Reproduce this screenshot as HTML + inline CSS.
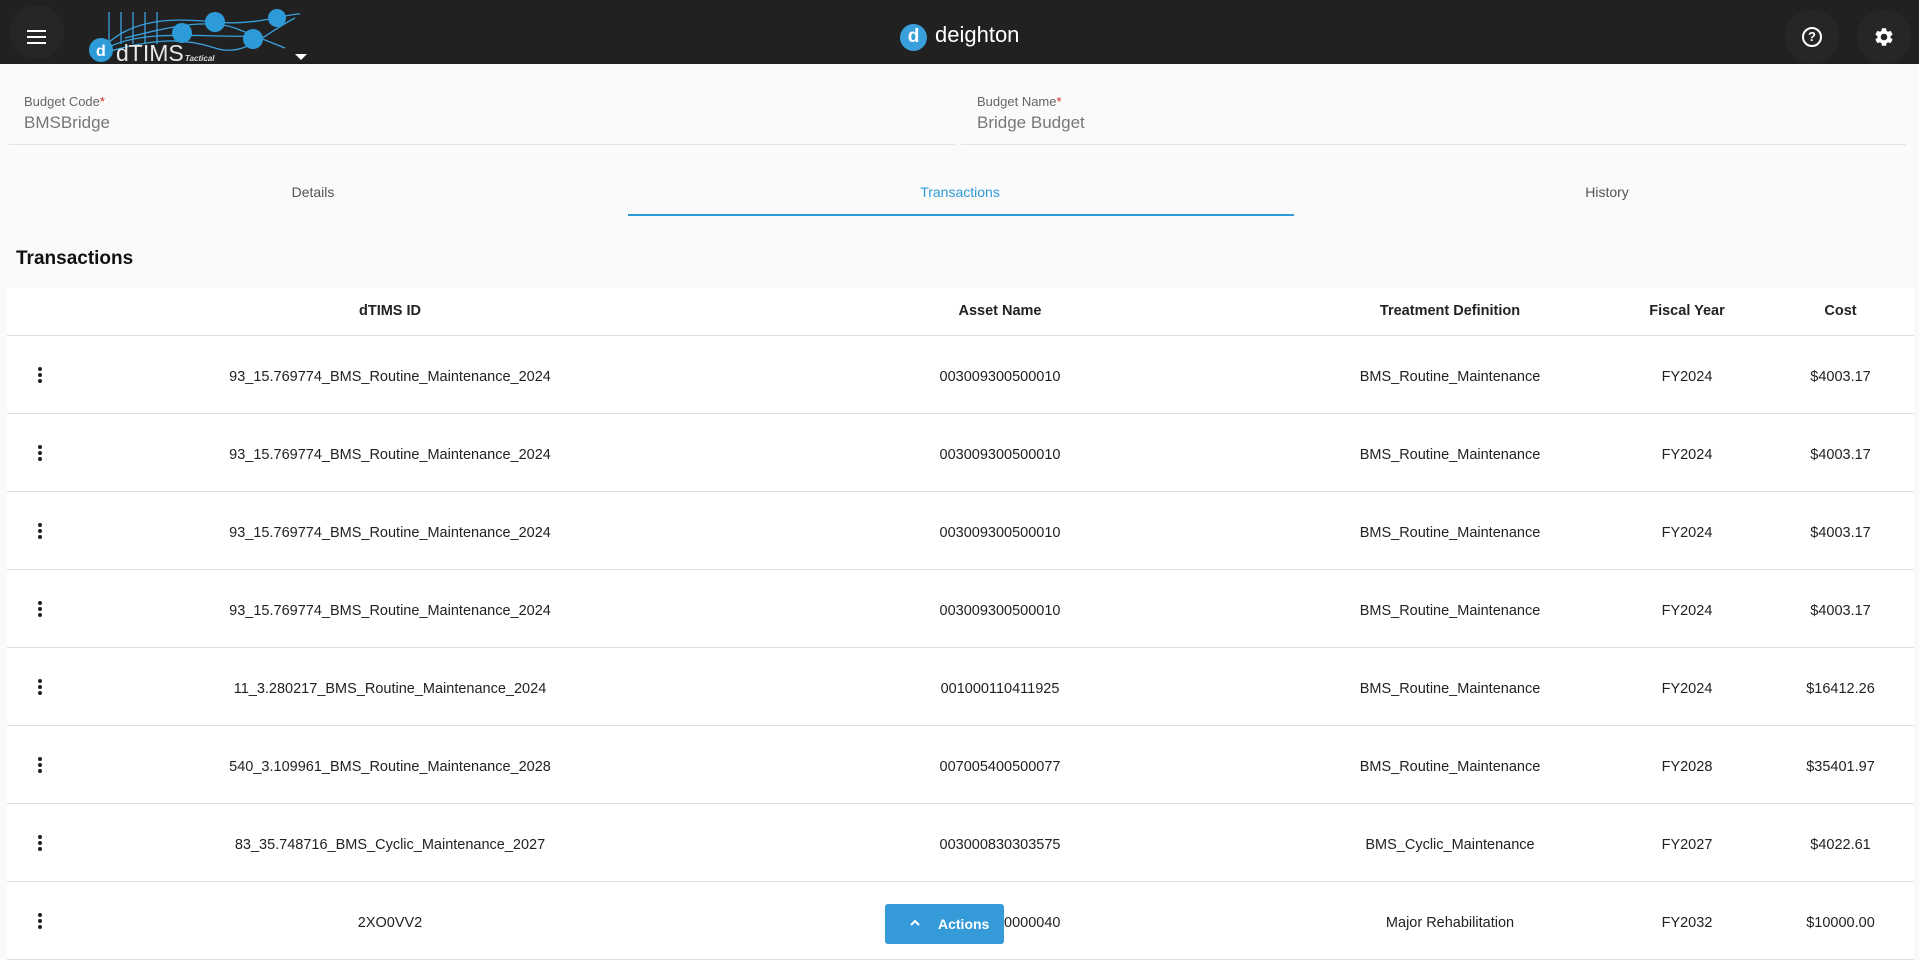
<!DOCTYPE html>
<html><head><meta charset="utf-8">
<style>
*{box-sizing:border-box;margin:0;padding:0}
body{width:1919px;height:942px;overflow:hidden;background:#fafafa;font-family:"Liberation Sans",sans-serif;color:#212121;position:relative}
.hdr{position:absolute;left:0;top:0;width:1919px;height:64px;background:#212121}
.abs{position:absolute}
.lbl{font-size:13px;color:#666}
.lbl b{color:#d32f2f;font-weight:normal}
.val{font-size:17px;color:#777}
.line{height:1px;background:#e4e4e4}
.tab{font-size:14px;color:#555;width:200px;text-align:center;margin-left:-100px}
table{position:absolute;left:7px;top:288px;width:1907px;border-collapse:collapse;background:#fff;font-size:14.5px}
th{height:47px;font-weight:bold;font-size:14.5px;border-bottom:1px solid #e0e0e0;color:#222}
td{height:78px;text-align:center;border-bottom:1px solid #e0e0e0;color:#222;padding-top:6px}
.k{width:66px}
.dots{display:inline-block;width:4px}
.dots i{display:block;width:4px;height:4px;border-radius:2px;background:#222;margin:2px 0}
</style></head><body>
<div class="hdr">
  <div class="abs" style="left:10px;top:5px;width:54px;height:54px;border-radius:50%;background:#262626"></div>
  <div class="abs" style="left:27px;top:30px;width:19px;height:2px;background:#fff"></div>
  <div class="abs" style="left:27px;top:36px;width:19px;height:2px;background:#fff"></div>
  <div class="abs" style="left:27px;top:42px;width:19px;height:2px;background:#fff"></div>
  <svg class="abs" style="left:85px;top:8px" width="220" height="56" viewBox="0 0 220 56">
    <g stroke="#3aa0dc" stroke-width="1.3" fill="none">
      <line x1="24" y1="4" x2="24" y2="36"/><line x1="36" y1="4" x2="36" y2="36"/><line x1="48" y1="4" x2="48" y2="36"/><line x1="60" y1="4" x2="60" y2="36"/><line x1="72" y1="4" x2="72" y2="36"/>
      <path d="M22 36 C50 10 90 10 130 14 C170 18 200 6 215 6"/>
      <path d="M22 40 C60 20 120 30 170 28 L200 40"/>
      <path d="M22 44 C70 30 100 30 130 40 C160 50 180 25 210 10"/>
      <path d="M40 30 C80 20 120 10 150 20 L170 28"/>
    </g>
    <circle cx="97" cy="25" r="10" fill="#2e9bd9"/>
    <circle cx="130" cy="14" r="10" fill="#2e9bd9"/>
    <circle cx="168" cy="31" r="10" fill="#2e9bd9"/>
    <circle cx="192" cy="10" r="9" fill="#2e9bd9"/>
    <circle cx="16" cy="42" r="12" fill="#2e9bd9"/>
    <text x="11" y="48" font-size="16" font-weight="bold" fill="#fff" font-family="Liberation Sans">d</text>
    <text x="31" y="53" font-size="23" fill="#e8e8e8" font-family="Liberation Sans">dTIMS</text>
    <text x="100" y="53" font-size="8" font-style="italic" font-weight="bold" fill="#ddd" font-family="Liberation Sans">Tactical</text>
  </svg>
  <div class="abs" style="left:295px;top:54px;width:0;height:0;border-left:6px solid transparent;border-right:6px solid transparent;border-top:6px solid #fff"></div>
  <div class="abs" style="left:900px;top:24px;width:27px;height:27px;border-radius:50%;background:#3aa0dc;color:#fff;font-weight:bold;font-size:19px;text-align:center;line-height:26px">d</div>
  <div class="abs" style="left:935px;top:22px;font-size:22px;color:#fff">deighton</div>
  <div class="abs" style="left:1785px;top:10px;width:54px;height:54px;border-radius:50%;background:#262626"></div>
  <div class="abs" style="left:1802px;top:27px;width:20px;height:20px;border-radius:50%;border:2px solid #fff;color:#fff;font-size:13px;font-weight:bold;text-align:center;line-height:16px">?</div>
  <div class="abs" style="left:1857px;top:10px;width:54px;height:54px;border-radius:50%;background:#262626"></div>
  <svg class="abs" style="left:1873px;top:26px" width="22" height="22" viewBox="0 0 24 24"><path fill="#fff" d="M19.14 12.94c.04-.3.06-.61.06-.94 0-.32-.02-.64-.07-.94l2.030-1.58a.49.49 0 0 0 .12-.61l-1.92-3.32a.49.49 0 0 0-.59-.22l-2.39.96c-.5-.38-1.03-.7-1.62-.94l-.36-2.54a.48.48 0 0 0-.48-.41h-3.84c-.24 0-.43.17-.47.41l-.36 2.54c-.59.24-1.13.57-1.62.94l-2.39-.96a.48.48 0 0 0-.59.22L2.74 8.87c-.12.21-.08.47.12.61l2.03 1.58c-.05.3-.09.63-.09.94s.02.64.07.94l-2.03 1.58a.49.49 0 0 0-.12.61l1.92 3.32c.12.22.37.29.59.22l2.39-.96c.5.38 1.03.7 1.62.94l.36 2.54c.05.24.24.41.48.41h3.84c.24 0 .44-.17.47-.41l.36-2.540c.59-.24 1.13-.56 1.62-.94l2.39.96c.22.08.47 0 .59-.22l1.92-3.32c.12-.22.07-.47-.12-.61l-2.01-1.58zM12 15.6A3.6 3.6 0 1 1 12 8.4a3.6 3.6 0 0 1 0 7.2z"/></svg>
</div>

<div class="abs lbl" style="left:24px;top:94px">Budget Code<b>*</b></div>
<div class="abs val" style="left:24px;top:113px">BMSBridge</div>
<div class="abs line" style="left:9px;top:144px;width:946px"></div>
<div class="abs lbl" style="left:977px;top:94px">Budget Name<b>*</b></div>
<div class="abs val" style="left:977px;top:113px">Bridge Budget</div>
<div class="abs line" style="left:961px;top:144px;width:945px"></div>

<div class="abs tab" style="left:313px;top:184px">Details</div>
<div class="abs tab" style="left:960px;top:184px;color:#2e9bd9">Transactions</div>
<div class="abs tab" style="left:1607px;top:184px">History</div>
<div class="abs" style="left:628px;top:214px;width:666px;height:2px;background:#2e9bd9"></div>

<div class="abs" style="left:16px;top:248px;font-size:19px;font-weight:bold;color:#111">Transactions</div>

<table>
<tr><th class="k"></th><th style="width:634px">dTIMS ID</th><th style="width:586px">Asset Name</th><th style="width:314px">Treatment Definition</th><th style="width:160px">Fiscal Year</th><th>Cost</th></tr>
<tr><td><span class="dots"><i></i><i></i><i></i></span></td><td>93_15.769774_BMS_Routine_Maintenance_2024</td><td>003009300500010</td><td>BMS_Routine_Maintenance</td><td>FY2024</td><td>$4003.17</td></tr>
<tr><td><span class="dots"><i></i><i></i><i></i></span></td><td>93_15.769774_BMS_Routine_Maintenance_2024</td><td>003009300500010</td><td>BMS_Routine_Maintenance</td><td>FY2024</td><td>$4003.17</td></tr>
<tr><td><span class="dots"><i></i><i></i><i></i></span></td><td>93_15.769774_BMS_Routine_Maintenance_2024</td><td>003009300500010</td><td>BMS_Routine_Maintenance</td><td>FY2024</td><td>$4003.17</td></tr>
<tr><td><span class="dots"><i></i><i></i><i></i></span></td><td>93_15.769774_BMS_Routine_Maintenance_2024</td><td>003009300500010</td><td>BMS_Routine_Maintenance</td><td>FY2024</td><td>$4003.17</td></tr>
<tr><td><span class="dots"><i></i><i></i><i></i></span></td><td>11_3.280217_BMS_Routine_Maintenance_2024</td><td>001000110411925</td><td>BMS_Routine_Maintenance</td><td>FY2024</td><td>$16412.26</td></tr>
<tr><td><span class="dots"><i></i><i></i><i></i></span></td><td>540_3.109961_BMS_Routine_Maintenance_2028</td><td>007005400500077</td><td>BMS_Routine_Maintenance</td><td>FY2028</td><td>$35401.97</td></tr>
<tr><td><span class="dots"><i></i><i></i><i></i></span></td><td>83_35.748716_BMS_Cyclic_Maintenance_2027</td><td>003000830303575</td><td>BMS_Cyclic_Maintenance</td><td>FY2027</td><td>$4022.61</td></tr>
<tr><td><span class="dots"><i></i><i></i><i></i></span></td><td>2XO0VV2</td><td>007000000000040</td><td>Major Rehabilitation</td><td>FY2032</td><td>$10000.00</td></tr>
</table>

<div class="abs" style="left:885px;top:904px;width:119px;height:40px;background:#349ad8;border-radius:3px;color:#fff;font-weight:bold;font-size:14px;line-height:38px">
  <svg class="abs" style="left:24px;top:14px" width="12" height="10" viewBox="0 0 12 10"><path d="M2 7 L6 3 L10 7" stroke="#fff" stroke-width="2" fill="none"/></svg>
  <span class="abs" style="left:53px;top:1px">Actions</span>
</div>
</body></html>
